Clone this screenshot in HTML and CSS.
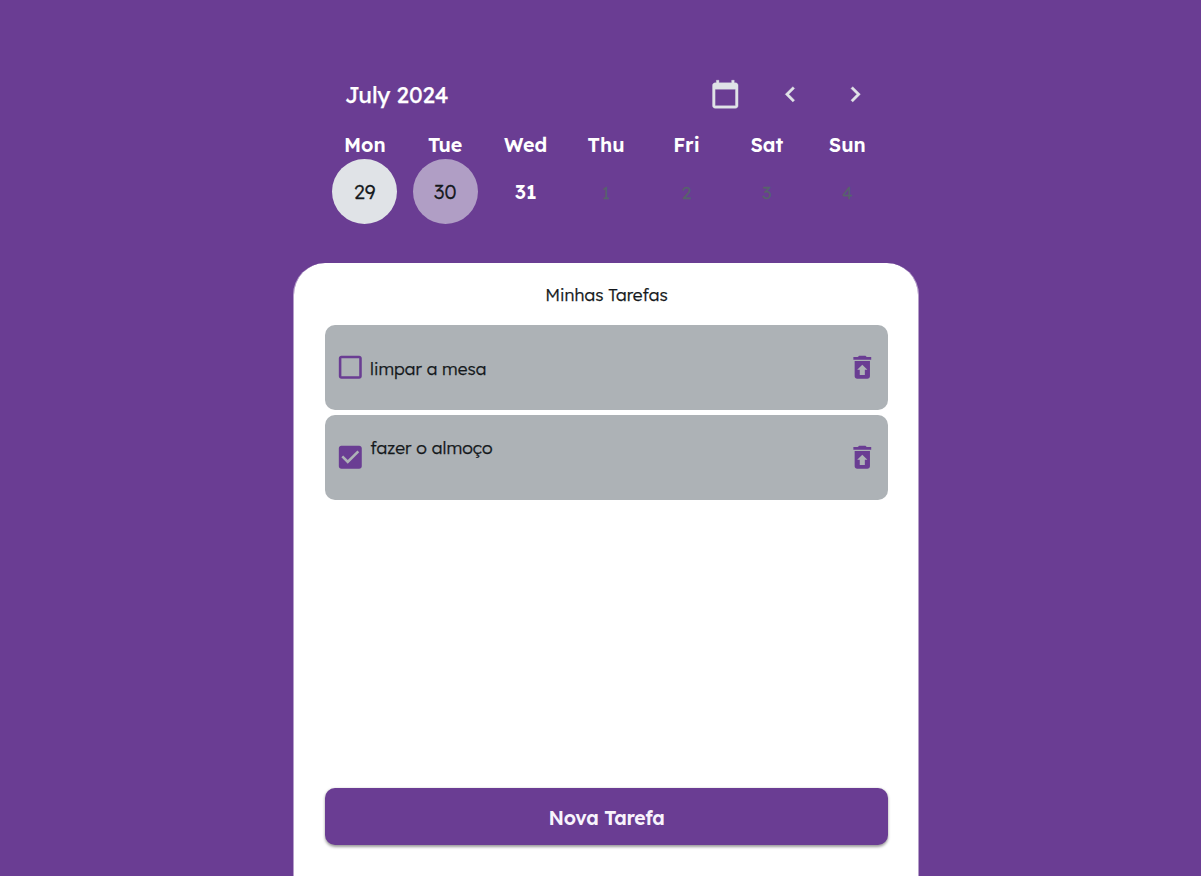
FILE: index.html
```html
<!DOCTYPE html>
<html lang="pt-BR">
<head>
<meta charset="utf-8">
<title>Minhas Tarefas</title>
<link rel="stylesheet" href="styles.css">
</head>
<body>
<main class="app">
  <section class="calendar">
    <header class="calendar-head">
      <h1 class="month">July 2024</h1>
      <nav class="controls">
        <svg class="icon" viewBox="0 0 24 24"><path class="bold" d="M20 3h-1V1h-2v2H7V1H5v2H4c-1.1 0-2 .9-2 2v16c0 1.1.9 2 2 2h16c1.1 0 2-.9 2-2V5c0-1.1-.9-2-2-2zm0 18H4V8h16v13z"/></svg>
        <svg class="icon" viewBox="0 0 24 24"><path class="bold" d="M15.41 7.41 14 6l-6 6 6 6 1.41-1.41L10.83 12z"/></svg>
        <svg class="icon" viewBox="0 0 24 24"><path class="bold" d="M10 6 8.59 7.41 13.17 12l-4.58 4.59L10 18l6-6z"/></svg>
      </nav>
    </header>
    <div class="week">
      <div class="day"><span class="weekday">Mon</span><span class="date today">29</span></div>
      <div class="day"><span class="weekday">Tue</span><span class="date selected">30</span></div>
      <div class="day"><span class="weekday">Wed</span><span class="date current">31</span></div>
      <div class="day"><span class="weekday">Thu</span><span class="date outside">1</span></div>
      <div class="day"><span class="weekday">Fri</span><span class="date outside">2</span></div>
      <div class="day"><span class="weekday">Sat</span><span class="date outside">3</span></div>
      <div class="day"><span class="weekday">Sun</span><span class="date outside">4</span></div>
    </div>
  </section>
  <section class="panel">
    <h2 class="panel-title">Minhas Tarefas</h2>
    <ul class="tasks">
      <li class="task">
        <svg class="icon" viewBox="0 0 24 24"><path d="M19 5v14H5V5h14m0-2H5c-1.1 0-2 .9-2 2v14c0 1.100.9 2 2 2h14c1.1 0 2-.9 2-2V5c0-1.1-.9-2-2-2z"/></svg>
        <span class="task-name">limpar a mesa</span>
        <svg class="icon" viewBox="0 0 24 24"><path d="M19 4h-3.500l-1-1h-5l-1 1H5v2h14zM6 7v12c0 1.100.9 2 2 2h8c1.100 0 2-.9 2-2V7zm8 7v4h-4v-4H8l4-4 4 4z"/></svg>
      </li>
      <li class="task">
        <svg class="icon" viewBox="0 0 24 24"><path d="M19 3H5c-1.110 0-2 .9-2 2v14c0 1.100.89 2 2 2h14c1.110 0 2-.9 2-2V5c0-1.100-.89-2-2-2zm-9 14-5-5 1.410-1.410L10 14.170l7.590-7.590L19 8z"/></svg>
        <span class="task-name raised">fazer o almoço</span>
        <svg class="icon" viewBox="0 0 24 24"><path d="M19 4h-3.500l-1-1h-5l-1 1H5v2h14zM6 7v12c0 1.100.9 2 2 2h8c1.100 0 2-.9 2-2V7zm8 7v4h-4v-4H8l4-4 4 4z"/></svg>
      </li>
    </ul>
    <button class="new-task">Nova Tarefa</button>
  </section>
</main>
</body>
</html>
```

FILE: styles.css
```css
* { box-sizing: border-box; }
body {
  margin: 0;
  height: 876px;
  overflow: hidden;
  background: #6a3d93;
  font-family: Lexend, Inter, "Open Sans", sans-serif;
  font-weight: 300;
  color: #14181b;
}
.app {
  width: 626px;
  height: 876px;
  margin-left: 293px;
  padding-top: 70px;
  display: flex;
  flex-direction: column;
}
.calendar { height: 193px; padding: 0 31.5px 0 31.6px; }
.icon { width: 30.6px; height: 30.6px; flex: none; fill: currentColor; display: block; }
.bold { stroke: currentColor; stroke-width: 0.3; }
.calendar-head {
  height: 62px;
  padding: 0 17px 0 20.4px;
  display: flex;
  justify-content: space-between;
}
.month {
  margin: 11px 0 0;
  font-size: 22.5px;
  line-height: 28px;
  font-weight: 400;
  color: #fff;
  white-space: nowrap;
  -webkit-text-stroke: 0.25px;
}
.controls { display: flex; gap: 34.4px; padding-top: 8.5px; color: #e0e3e7; }
.week { display: grid; grid-template-columns: repeat(7, 1fr); }
.day { display: flex; flex-direction: column; align-items: center; }
.weekday { height: 27px; line-height: 26px; font-size: 19.6px; font-weight: 600; color: #fff; }
.date {
  width: 65px;
  height: 65px;
  border-radius: 50%;
  line-height: 65px;
  text-align: center;
  font-size: 19.6px;
  -webkit-text-stroke: 0.3px;
}
.today { background: #e0e3e7; }
.selected { background: #b09ec5; }
.current { color: #fff; font-weight: 600; -webkit-text-stroke: 0; }
.outside { color: #57636c; font-size: 17.3px; line-height: 67px; }
.panel {
  flex: 1;
  background: #fff;
  background-clip: padding-box;
  border: solid rgba(255, 255, 255, 0.5);
  border-width: 0 1px;
  border-radius: 32px 32px 0 0;
  padding: 0 30px 31px 31px;
  display: flex;
  flex-direction: column;
}
.panel-title {
  margin: 0;
  height: 62px;
  line-height: 63px;
  text-align: center;
  font-size: 17.3px;
  font-weight: 300;
  -webkit-text-stroke: 0.25px;
}
.tasks { list-style: none; margin: 0; padding: 0; display: flex; flex-direction: column; gap: 5px; }
.task {
  height: 85px;
  padding: 0 10px 0 9.5px;
  border-radius: 10px;
  background: #adb2b6;
  color: #6a3d93;
  display: flex;
  align-items: center;
}
.task-name {
  flex: 1;
  padding: 2px 0 0 5px;
  font-size: 17.2px;
  line-height: 22px;
  color: #14181b;
  -webkit-text-stroke: 0.25px;
}
.raised { padding: 0 0 19px 5.2px; font-size: 17.4px; }
.new-task {
  margin-top: auto;
  height: 57px;
  border: 0;
  border-radius: 10px;
  background: #6a3d93;
  color: #f8f3fc;
  font: 600 19.4px/58px Lexend, Inter, "Open Sans", sans-serif;
  letter-spacing: -0.3px;
  box-shadow: 0 1.5px 3px rgba(0, 0, 0, 0.4);
}
```
